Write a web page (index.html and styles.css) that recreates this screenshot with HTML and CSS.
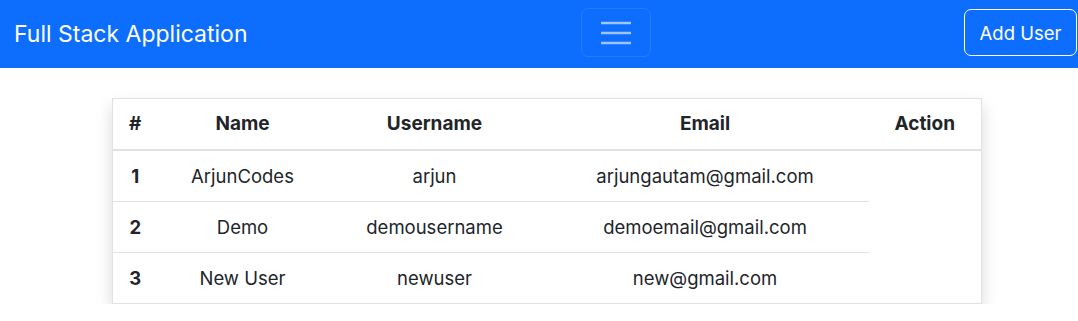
FILE: index.html
```html
<!DOCTYPE html>
<html lang="en">
<head>
<meta charset="utf-8">
<title>Full Stack Application</title>
<link rel="stylesheet" href="styles.css">
</head>
<body>
<nav class="navbar">
  <a class="brand" href="#">Full Stack Application</a>
  <button class="toggler" type="button" aria-label="Toggle navigation">
    <svg width="30" height="30" viewBox="0 0 30 30" aria-hidden="true">
      <path d="M0 5h30M0 15h30M0 25h30" stroke="rgba(255,255,255,0.6)" stroke-width="2.4" stroke-linecap="butt"/>
    </svg>
  </button>
  <a class="add-btn" href="#">Add User</a>
</nav>
<main class="page">
  <table class="users">
    <colgroup>
      <col class="c-id"><col class="c-name"><col class="c-user"><col class="c-email"><col class="c-action">
    </colgroup>
    <thead>
      <tr><th>#</th><th>Name</th><th>Username</th><th>Email</th><th>Action</th></tr>
    </thead>
    <tbody>
      <tr><th>1</th><td>ArjunCodes</td><td>arjun</td><td>arjungautam@gmail.com</td></tr>
      <tr><th>2</th><td>Demo</td><td>demousername</td><td>demoemail@gmail.com</td></tr>
      <tr class="last"><th>3</th><td>New User</td><td>newuser</td><td>new@gmail.com</td></tr>
    </tbody>
  </table>
</main>
</body>
</html>
```

FILE: styles.css
```css
* { box-sizing: border-box; }
html, body { margin: 0; padding: 0; }
body {
  font-family: Inter, "Liberation Sans", sans-serif;
  color: #212529;
  background: #fff;
  overflow: hidden;
}
.navbar {
  display: flex;
  align-items: center;
  height: 68px;
  background: #0d6efd;
  padding: 0 1px 0 14px;
}
.brand {
  color: #fff;
  text-decoration: none;
  font-size: 23px;
  line-height: 30px;
}
.toggler {
  margin-left: 334px;
  margin-top: -3px;
  width: 70px;
  height: 49px;
  background: transparent;
  border: 1px solid rgba(255,255,255,0.1);
  border-radius: 7px;
  padding: 0;
  display: flex;
  align-items: center;
  justify-content: center;
}
.toggler svg { display: block; }
.add-btn {
  margin-left: auto;
  margin-top: -3px;
  width: 113px;
  height: 47px;
  display: flex;
  align-items: center;
  justify-content: center;
  border: 1px solid #fff;
  border-radius: 7px;
  color: #fff;
  text-decoration: none;
  font-size: 18.5px;
}
.page {
  padding: 30px 0 0 112px;
}
.users {
  width: 869px;
  border-collapse: collapse;
  table-layout: fixed;
  border: 1px solid #dee2e6;
  box-shadow: 0 8px 16px rgba(0,0,0,0.15);
  background: #fff;
  font-size: 18.5px;
}
.c-id { width: 45px; }
.c-name { width: 170px; }
.c-user { width: 214px; }
.c-email { width: 327px; }
.c-action { width: 113px; }
.users th, .users td {
  text-align: center;
  height: 51px;
  padding: 0 2px;
  vertical-align: middle;
  white-space: nowrap;
}
.users th { font-weight: 700; }
.users td { font-weight: 400; }
.users thead th { height: 51px; border-bottom: 2px solid #dee2e6; font-size: 19px; }
.users tbody th, .users tbody td { border-bottom: 1px solid #dee2e6; }
.users tbody tr:first-child th, .users tbody tr:first-child td { height: 52px; }
.users tbody tr.last th, .users tbody tr.last td { border-bottom: none; }
```
